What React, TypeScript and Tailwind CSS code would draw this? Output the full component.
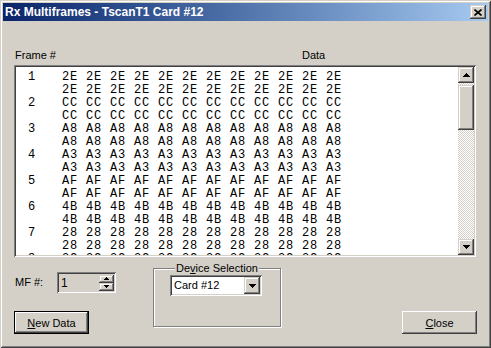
import type { ReactNode } from 'react';

const frames = ['2E', 'CC', 'A8', 'A3', 'AF', '4B', '28', '3C'];

const raised =
  'shadow-[inset_-1px_-1px_#404040,inset_1px_1px_#ffffff,inset_-2px_-2px_#808080,inset_2px_2px_#d4d0c8]';
const sunken =
  'shadow-[inset_1px_1px_#808080,inset_-1px_-1px_#ffffff,inset_2px_2px_#404040,inset_-2px_-2px_#d4d0c8]';
const scrollBtn =
  'shadow-[inset_-1px_-1px_#404040,inset_1px_1px_#d4d0c8,inset_-2px_-2px_#808080,inset_2px_2px_#ffffff]';

function Arrow({ up, small }: { up?: boolean; small?: boolean }) {
  const w = small ? 5 : 7;
  const h = small ? 3 : 4;
  return (
    <svg width={w} height={h} viewBox={`0 0 ${w} ${h}`} shapeRendering="crispEdges">
      <polygon
        points={up ? `${w / 2},0 ${w},${h} 0,${h}` : `0,0 ${w},0 ${w / 2},${h}`}
        fill="#000"
      />
    </svg>
  );
}

function Button({ children, isDefault }: { children: ReactNode; isDefault?: boolean }) {
  return (
    <div
      className={`w-[75px] h-[23px] flex items-center justify-center ${raised} ${
        isDefault ? 'border border-black' : ''
      }`}
    >
      <span className="pt-[1px]">{children}</span>
    </div>
  );
}

export default function App() {
  return (
    <div className="w-[491px] h-[348px] bg-[#d4d0c8] p-[3px] flex flex-col text-[11px] text-black font-['Liberation_Sans',Arial,sans-serif] shadow-[inset_1px_1px_#d4d0c8,inset_-1px_-1px_#404040,inset_2px_2px_#ffffff,inset_-2px_-2px_#808080]">
      {/* caption */}
      <div className="h-[18px] flex items-center justify-between bg-linear-to-r from-[#0a246a] to-[#a6caf0] pl-[2px] pr-[2px]">
        <span className="text-white font-bold text-[12px] leading-none">
          Rx Multiframes - TscanT1 Card #12
        </span>
        <div className={`w-[16px] h-[14px] bg-[#d4d0c8] flex items-center justify-center ${scrollBtn}`}>
          <svg width="8" height="7" viewBox="0 0 8 7">
            <path d="M0.5 0.5 L7.5 6.5 M7.5 0.5 L0.5 6.5" stroke="#000" strokeWidth="1.6" />
          </svg>
        </div>
      </div>

      {/* labels */}
      <div className="flex mt-[28px] pl-[12px] leading-[13px]">
        <span className="w-[287px]">Frame #</span>
        <span>Data</span>
      </div>

      {/* list box */}
      <div className={`ml-[11px] mt-[3px] w-[462px] h-[192px] bg-white p-[2px] flex ${sunken}`}>
        <div className="flex-1 overflow-hidden pt-[4px] pl-[12px] font-['Liberation_Mono','Courier_New',monospace] text-[12px] leading-[13px] tracking-[0.8px]">
          {frames.map((h, i) =>
            [0, 1].map((line) => (
              <div key={`${i}-${line}`} className="flex whitespace-pre">
                <span className="w-[34px]">{line === 0 ? i + 1 : ''}</span>
                <span>{Array(12).fill(h).join(' ')}</span>
              </div>
            ))
          )}
        </div>
        <div className="w-[16px] flex flex-col bg-[repeating-conic-gradient(#d4d0c8_0%_25%,#ffffff_0%_50%)] bg-[length:2px_2px]">
          <div className={`h-[16px] bg-[#d4d0c8] flex items-center justify-center ${scrollBtn}`}>
            <Arrow up />
          </div>
          <div className={`h-[45px] mt-[2px] bg-[#d4d0c8] ${scrollBtn}`} />
          <div className="flex-1" />
          <div className={`h-[16px] bg-[#d4d0c8] flex items-center justify-center ${scrollBtn}`}>
            <Arrow />
          </div>
        </div>
      </div>

      {/* bottom controls */}
      <div className="flex items-start">
        <div className="ml-[11px] w-[102px] flex flex-col">
          <div className="mt-[15px] flex items-center">
            <span className="pl-[1px] w-[43px]">MF #:</span>
            <div className={`w-[59px] h-[21px] bg-[#d4d0c8] flex items-center pl-[4px] pr-[2px] ${sunken}`}>
              <span className="flex-1 text-[12px]">1</span>
              <div className="flex flex-col w-[15px]">
                <div className={`h-[8px] bg-[#d4d0c8] flex items-center justify-center ${scrollBtn}`}>
                  <Arrow up small />
                </div>
                <div className={`h-[8px] bg-[#d4d0c8] flex items-center justify-center ${scrollBtn}`}>
                  <Arrow small />
                </div>
              </div>
            </div>
          </div>
          <div className="mt-[18px]">
            <Button isDefault>
              <span className="underline underline-offset-1">N</span>ew Data
            </Button>
          </div>
        </div>

        <div className="ml-[37px] mt-[11px] relative w-[128px] h-[59px] border border-[#808080] shadow-[inset_1px_1px_#ffffff,1px_1px_#ffffff]">
          <span className="absolute -top-[7px] left-1/2 -translate-x-1/2 px-[1px] bg-[#d4d0c8] leading-[13px] whitespace-nowrap">
            De<span className="underline underline-offset-1">v</span>ice Selection
          </span>
          <div className={`ml-[16px] mt-[6px] w-[92px] h-[21px] bg-white flex items-center pl-[4px] pr-[2px] ${sunken}`}>
            <span className="flex-1">Card #12</span>
            <div className={`w-[16px] h-[17px] bg-[#d4d0c8] flex items-center justify-center ${scrollBtn}`}>
              <Arrow />
            </div>
          </div>
        </div>

        <div className="ml-auto mr-[11px] mt-[54px]">
          <Button>
            <span className="underline underline-offset-1">C</span>lose
          </Button>
        </div>
      </div>
    </div>
  );
}
